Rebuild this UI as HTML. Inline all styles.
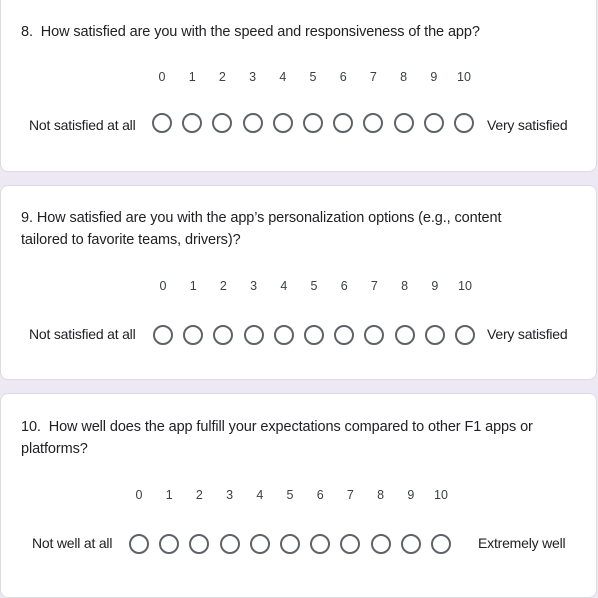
<!DOCTYPE html><html><head><style>
body{margin:0;width:598px;height:589px;background:#ece9f5;position:relative;overflow:hidden;font-family:"Liberation Sans",Arial,sans-serif;color:#202124}
.card{position:absolute;left:0;width:597px;background:#fff;border-radius:8px;border:1px solid #dadce0;box-sizing:border-box}
.t{position:absolute;font-size:14px;letter-spacing:-0.2px;color:#202124}
.q{position:absolute;left:21px;font-size:14.5px;line-height:22px;width:570px;letter-spacing:-0.1px}
.n{position:absolute;font-size:12.5px;width:20px;text-align:center;margin-left:-10px;color:#3c4043}
.c{position:absolute;width:16px;height:16px;border:2px solid #5f6368;border-radius:50%;margin-left:-10px;margin-top:-10px}
</style></head><body>
<div class="card" style="top:-8px;height:180px"></div>
<div class="card" style="top:185px;height:195px"></div>
<div class="card" style="top:393px;height:205px"></div>
<div class="q" style="top:21px">8.&nbsp; How satisfied are you with the speed and responsiveness of the app?</div>
<div class="q" style="top:207px">9. How satisfied are you with the app’s personalization options (e.g., content<br>tailored to favorite teams, drivers)?</div>
<div class="q" style="top:416px">10.&nbsp; How well does the app fulfill your expectations compared to other F1 apps or<br>platforms?</div>
<div class="t" style="left:29px;top:117px">Not satisfied at all</div>
<div class="t" style="left:487px;top:117px">Very satisfied</div>
<div class="t" style="left:29px;top:326px">Not satisfied at all</div>
<div class="t" style="left:487px;top:326px">Very satisfied</div>
<div class="t" style="left:32px;top:535px">Not well at all</div>
<div class="t" style="left:478px;top:535px">Extremely well</div>
<div id="s"></div>
<script>
var s='';
function row(x0,ny,cy){for(var i=0;i<=10;i++){var x=x0+i*30.2;s+='<div class="n" style="left:'+x+'px;top:'+(ny-8)+'px">'+i+'</div><div class="c" style="left:'+x+'px;top:'+cy+'px"></div>';}}
row(162,78,123);row(163,287,335);row(139,496,544);
document.getElementById('s').innerHTML=s;
</script>
</body></html>
